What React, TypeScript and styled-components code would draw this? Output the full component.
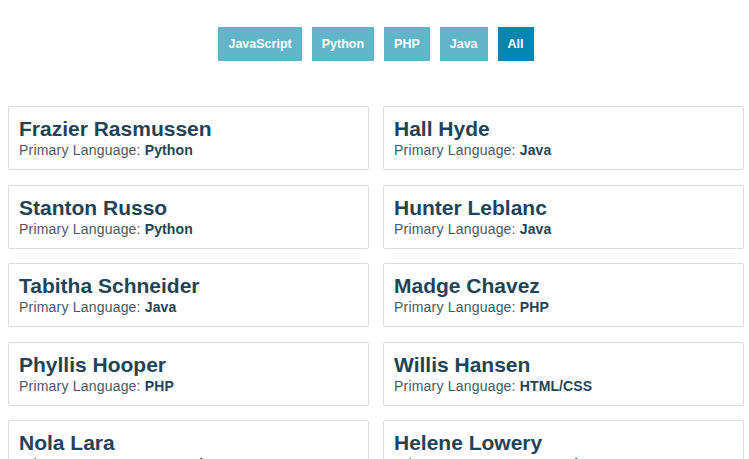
import React, { useState } from 'react';
import styled, { createGlobalStyle } from 'styled-components';

const colors = {
  filter: '#62b4c8',
  active: '#0287b3',
  ink: '#1f4457',
  muted: '#465a66',
  border: '#dcdcdc',
};

type Dev = { name: string; language: string };

const developers: Dev[] = [
  { name: 'Frazier Rasmussen', language: 'Python' },
  { name: 'Hall Hyde', language: 'Java' },
  { name: 'Stanton Russo', language: 'Python' },
  { name: 'Hunter Leblanc', language: 'Java' },
  { name: 'Tabitha Schneider', language: 'Java' },
  { name: 'Madge Chavez', language: 'PHP' },
  { name: 'Phyllis Hooper', language: 'PHP' },
  { name: 'Willis Hansen', language: 'HTML/CSS' },
  { name: 'Nola Lara', language: 'JavaScript' },
  { name: 'Helene Lowery', language: 'JavaScript' },
];

const filters = ['JavaScript', 'Python', 'PHP', 'Java', 'All'];

const GlobalStyle = createGlobalStyle`
  body {
    margin: 8px 5px 8px 8px;
    background: #fff;
    font-family: "Liberation Sans", Arial, sans-serif;
  }
`;

const Filters = styled.div`
  display: flex;
  justify-content: center;
  gap: 10px;
  padding: 19px 0 0;
  margin-bottom: 45px;
`;

const FilterButton = styled.button<{ $active: boolean }>`
  height: 34px;
  padding: 0 10px;
  border: none;
  background: ${(p) => (p.$active ? colors.active : colors.filter)};
  color: #fff;
  font-family: inherit;
  font-size: 12.5px;
  font-weight: bold;
  cursor: pointer;
`;

const Grid = styled.div`
  display: grid;
  grid-template-columns: 1fr 1fr;
  column-gap: 14px;
  row-gap: 14.5px;
`;

const Card = styled.div`
  border: 1px solid ${colors.border};
  border-radius: 2px;
  padding: 10px 10px 0;
  box-sizing: border-box;
  height: 64px;
`;

const Name = styled.div`
  color: ${colors.ink};
  font-size: 21px;
  font-weight: bold;
  line-height: 24px;
`;

const Lang = styled.div`
  color: ${colors.muted};
  font-size: 14px;
  letter-spacing: 0.2px;
  line-height: 18px;

  b {
    color: ${colors.ink};
    letter-spacing: 0.1px;
  }
`;

export default function App() {
  const [active, setActive] = useState('All');
  const shown = active === 'All' ? developers : developers.filter((d) => d.language === active);
  return (
    <>
      <GlobalStyle />
      <Filters>
        {filters.map((f) => (
          <FilterButton key={f} $active={f === active} onClick={() => setActive(f)}>
            {f}
          </FilterButton>
        ))}
      </Filters>
      <Grid>
        {shown.map((d) => (
          <Card key={d.name}>
            <Name>{d.name}</Name>
            <Lang>
              Primary Language: <b>{d.language}</b>
            </Lang>
          </Card>
        ))}
      </Grid>
    </>
  );
}
